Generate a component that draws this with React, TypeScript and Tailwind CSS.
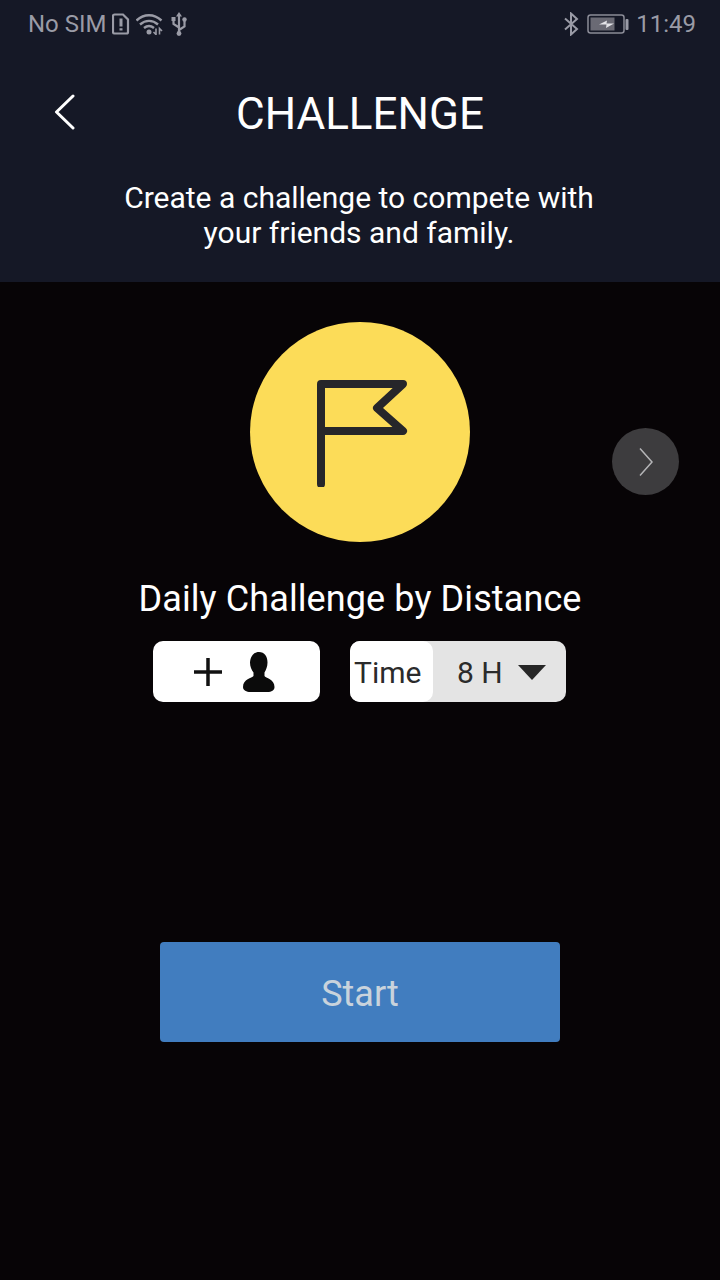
function SimIcon() {
  return (
    <svg width="18" height="22" viewBox="0 0 18 22" fill="none" className="text-[#9a9ba6]">
      <path d="M2.500 1.500h8.500l5 5v12.500a1.500 1.500 0 0 1-1.500 1.500h-12a1.500 1.500 0 0 1-1.500-1.500v-16a1.500 1.500 0 0 1 1.500-1.500z" stroke="currentColor" strokeWidth="2.200" />
      <path d="M9 5.500v8M9 15.200v2.300" stroke="currentColor" strokeWidth="3" />
    </svg>
  );
}

function WifiIcon() {
  return (
    <svg width="28" height="22" viewBox="0 0 28 22" fill="none" className="text-[#9a9ba6]">
      <path d="M0.500 7.500c7.500-7 17.500-7 25 0M4 11.500c5.500-4.800 12.500-4.800 18 0M8 15c3-2.400 7-2.400 10 0" stroke="currentColor" strokeWidth="2.400" />
      <circle cx="13" cy="19" r="2.500" fill="currentColor" />
      <path d="M20 15.500v6l-2.500-2.500M23.500 21.500v-6l2.500 2.500" stroke="currentColor" strokeWidth="1.600" />
    </svg>
  );
}

function UsbIcon() {
  return (
    <svg width="16" height="24" viewBox="0 0 16 24" fill="none" className="text-[#9a9ba6]">
      <path d="M8 2v20M8 15.500 2.500 12V8M8 18l5.500-3.500V9" stroke="currentColor" strokeWidth="2.200" />
      <path d="M8 0 11 4.500H5z" fill="currentColor" />
      <rect x="0.500" y="5" width="4" height="4" fill="currentColor" />
      <circle cx="13.500" cy="7.500" r="2.200" fill="currentColor" />
      <circle cx="8" cy="21.500" r="2.400" fill="currentColor" />
    </svg>
  );
}

function BluetoothIcon() {
  return (
    <svg width="16" height="24" viewBox="0 0 16 24" fill="none" className="text-[#9a9ba6]">
      <path d="M2 6.500 14 17l-6 5.500v-21L14 7 2 17.500" stroke="currentColor" strokeWidth="2" />
    </svg>
  );
}

function BatteryIcon() {
  return (
    <svg width="42" height="20" viewBox="0 0 42 20" fill="none">
      <rect x="1" y="1" width="36" height="18" rx="2.500" stroke="#8b8c97" strokeWidth="1.500" />
      <rect x="3.500" y="3.500" width="24" height="13" fill="#6a6a74" />
      <rect x="38.500" y="5" width="3" height="11" rx="1" fill="#9a9ba6" />
      <path d="M12 10.500 20 6.500l-.5 3H27l-8 4.500.5-3.500z" fill="#e4e4e8" />
    </svg>
  );
}

function FlagIcon() {
  return (
    <svg width="96" height="110" viewBox="0 0 96 110" fill="none">
      <path d="M4 107V7h82L60 31l26 23H4" stroke="#26262a" strokeWidth="8" strokeLinecap="round" strokeLinejoin="round" />
    </svg>
  );
}

function PersonIcon() {
  return (
    <svg width="32" height="40" viewBox="0 0 32 40" fill="#0b0b0b">
      <path d="M16 0c5.500 0 8.500 4.500 8.500 10.500 0 4-1.500 7.500-3 10v3.500c1 2 10 3 10 11 0 3.500-3 5-7 5h-17c-4 0-7.500-1.500-7.500-5 0-8 9-9 10.500-11v-3.500c-2-2.500-3.500-6-3.500-10C7.500 4.500 10.500 0 16 0z" />
    </svg>
  );
}

export default function App() {
  return (
    <div className="relative flex min-h-[1280px] flex-col bg-[#070406] font-['Roboto',sans-serif]">
      <header className="h-[282px] bg-[#151826]">
        <div className="flex h-[48px] items-center justify-between pl-[28px] pr-[24px] text-[24px] text-[#9a9ba6]">
          <div className="flex items-center gap-[4px]">
            <span className="mr-[1px]">No SIM</span>
            <SimIcon />
            <span className="ml-[2px]"><WifiIcon /></span>
            <span className="ml-[3px]"><UsbIcon /></span>
          </div>
          <div className="flex items-center">
            <BluetoothIcon />
            <span className="ml-[8px]"><BatteryIcon /></span>
            <span className="ml-[7px]">11:49</span>
          </div>
        </div>

        <div className="relative mt-[36px] flex h-[60px] items-center justify-center">
          <svg width="24" height="36" viewBox="0 0 24 36" fill="none" className="absolute left-[53px] top-[10px]">
            <path d="M20 2 3.500 18 20 34" stroke="#ffffff" strokeWidth="3" strokeLinecap="round" strokeLinejoin="round" />
          </svg>
          <h1 className="text-[44px] font-normal text-white">CHALLENGE</h1>
        </div>

        <p className="mt-[36px] pr-[2px] text-center text-[30px] leading-[35px] text-white">
          Create a challenge to compete with
          <br />
          your friends and family.
        </p>
      </header>

      <main className="flex flex-col items-center">
        <div className="mt-[40px] flex h-[220px] w-[220px] items-center justify-center rounded-full bg-[#fcdc58]">
          <span className="ml-[10px]"><FlagIcon /></span>
        </div>

        <h2 className="mt-[35px] text-[36px] leading-[44px] tracking-[0.1px] text-white">Daily Challenge by Distance</h2>

        <div className="mr-[1px] mt-[20px] flex gap-[30px]">
          <button className="flex h-[61px] w-[167px] items-center justify-center gap-[21px] rounded-[10px] bg-white pr-[4px]">
            <svg width="28" height="28" viewBox="0 0 28 28" fill="none">
              <path d="M14 0v28M0 14h28" stroke="#111111" strokeWidth="3.500" />
            </svg>
            <PersonIcon />
          </button>

          <div className="flex h-[61px] w-[216px] overflow-hidden rounded-[10px] bg-[#e4e4e4] text-[30px] text-[#2b2b2b]">
            <span className="flex w-[83px] items-center rounded-r-[10px] bg-white pl-[4px] pt-[2px]">Time</span>
            <span className="flex flex-1 items-center pl-[24px] pt-[2px]">8 H</span>
            <span className="mr-[20px] mt-[24px] h-0 w-0 border-x-[14px] border-t-[15px] border-x-transparent border-t-[#262626]" />
          </div>
        </div>

        <button className="mt-[240px] h-[100px] w-[400px] rounded-[4px] bg-[#417dbf] pt-[3px] text-[36px] text-[#c9d3dc]">Start</button>
      </main>

      <div className="absolute left-[612px] top-[428px] flex h-[67px] w-[67px] items-center justify-center rounded-full bg-[#3d3c3e]">
        <svg width="16" height="30" viewBox="0 0 16 30" fill="none" className="ml-[1px]">
          <path d="M2 1.500 14 15 2 28.500" stroke="#b5b5b7" strokeWidth="1.500" />
        </svg>
      </div>
    </div>
  );
}
